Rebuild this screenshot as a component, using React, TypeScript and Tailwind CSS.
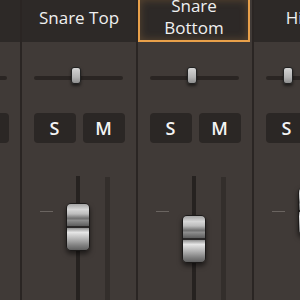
interface Channel {
  name: string
  selected?: boolean
  pan: number
  fader: number | null
}

const channels: Channel[] = [
  { name: "Kick", pan: 49, fader: 190 },
  { name: "Snare Top", pan: 49, fader: 204 },
  { name: "Snare Bottom", selected: true, pan: 49, fader: 216 },
  { name: "Hi-Hat", pan: 29, fader: 188 },
]

function FaderKnob({ top }: { top: number }) {
  return (
    <div
      className="absolute left-[44px] w-[24px] h-[48px] rounded-[5px] border border-[#1c1a19] overflow-hidden flex flex-col shadow-[0_3px_5px_rgba(0,0,0,0.55)]"
      style={{ top }}
    >
      <div className="h-[22px] bg-[linear-gradient(to_bottom,#a4a4a4,#d6d6d6_25%,#bcbcbc_45%,#707070_65%,#8c8c8c_75%,#5c5c5c_100%)]" />
      <div className="h-[2px] bg-[#2a2828]" />
      <div className="flex-1 bg-[linear-gradient(to_bottom,#909090,#e6e6e6_20%,#b4b4b4_50%,#7e7e7e_80%,#606060_100%)]" />
    </div>
  )
}

function Strip({ ch }: { ch: Channel }) {
  return (
    <div className="w-[116px] shrink-0 h-full flex">
      <div className="w-[2px] h-full bg-[#2a2523]" />
      <div className="w-[114px] h-full flex flex-col bg-[#403a37]">
        <div
          className={`h-[42px] overflow-hidden flex items-center justify-center pb-[6px] bg-[#2d2927] ${
            ch.selected ? "border-2 border-t-0 border-[#e8a04a] shadow-[inset_0_0_8px_rgba(232,160,74,0.25)] mr-[2px]" : ""
          }`}
        >
          <div className="text-[17px] leading-[22px] font-medium text-[#f0f0f0] text-center w-[84px]">{ch.name}</div>
        </div>

        <div className="relative h-[34px] mt-[25px]">
          <div className="absolute left-[12px] top-[9px] w-[89px] h-[4px] rounded-full bg-[#2a2523]" />
          <div
            className="absolute top-0 w-[10px] h-[17px] rounded-[3px] border border-[#222] bg-[linear-gradient(to_bottom,#d4d4d4,#b4b4b4_60%,#8e8e8e)] shadow-[0_2px_3px_rgba(0,0,0,0.5)]"
            style={{ left: ch.pan }}
          />
        </div>

        <div className="flex justify-center gap-[7px] mt-[12px]">
          <div className="w-[42px] h-[30px] rounded-[4px] bg-[#2b2725] flex items-center justify-center text-[18px] font-semibold text-[#f4f4f4]">S</div>
          <div className="w-[42px] h-[30px] rounded-[4px] bg-[#2b2725] flex items-center justify-center text-[18px] font-semibold text-[#f4f4f4]">M</div>
        </div>

        <div className="relative flex-1 mt-[33px]">
          <div className="absolute left-[18px] top-[35px] w-[13px] h-[1px] bg-[#6a6460]" />
          <div className="absolute left-[54px] top-0 bottom-0 w-[4px] bg-[#262220]" />
          <div className="absolute left-[83px] top-[1px] bottom-0 w-[5px] bg-[#332e2b]" />
          {ch.fader !== null && <FaderKnob top={ch.fader - 177} />}
        </div>
      </div>
    </div>
  )
}

export default function App() {
  return (
    <div className="w-[300px] h-[300px] overflow-hidden bg-[#403a37] font-['Open_Sans',sans-serif]">
      <div className="flex h-full ml-[-96px]">
        {channels.map((ch) => (
          <Strip key={ch.name} ch={ch} />
        ))}
      </div>
    </div>
  )
}
